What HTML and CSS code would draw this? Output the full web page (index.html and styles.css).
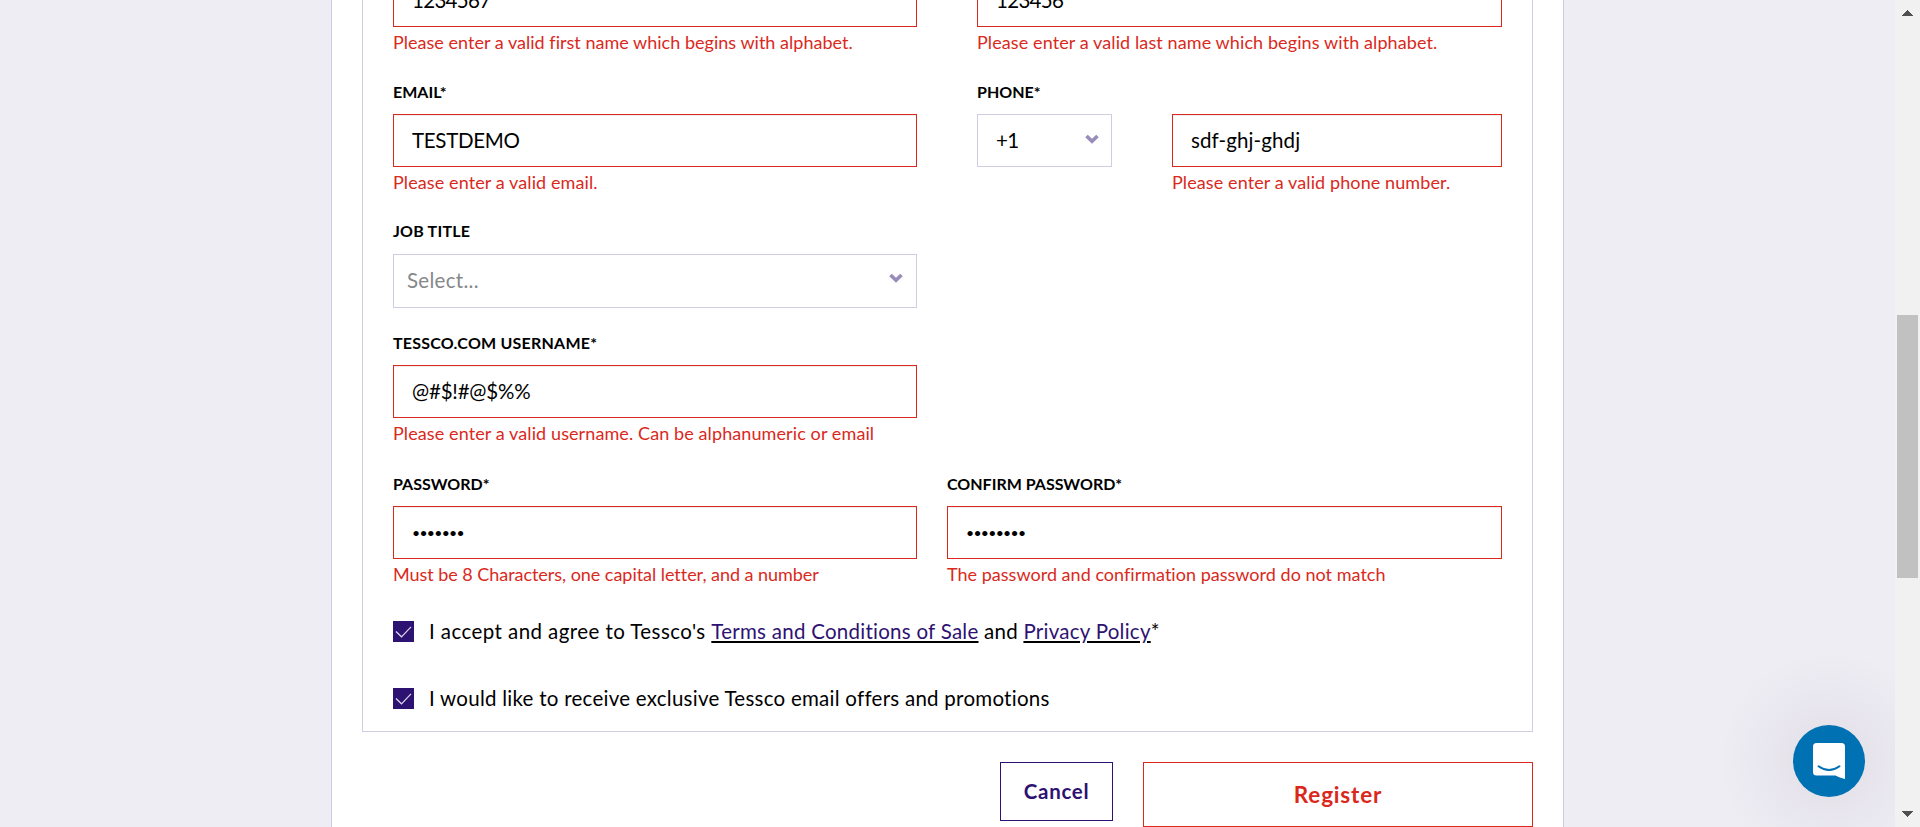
FILE: index.html
```html
<!DOCTYPE html>
<html lang="en">
<head>
<meta charset="utf-8">
<title>Tessco Registration</title>
<link rel="stylesheet" href="styles.css">
</head>
<body>
<main class="page">
  <section class="panel">
    <form class="card">
      <div class="row row-name">
        <div class="field"><div class="input invalid num">1234567</div><p class="error">Please enter a valid first name which begins with alphabet.</p></div>
        <div class="field"><div class="input invalid num">123456</div><p class="error error-wide">Please enter a valid last name which begins with alphabet.</p></div>
      </div>
      <div class="row row-contact">
        <div class="field"><label class="label">EMAIL*</label><div class="input invalid plain">TESTDEMO</div><p class="error error-wide">Please enter a valid email.</p></div>
        <div class="field">
          <label class="label">PHONE*</label>
          <div class="phone">
            <div class="input country num">+1<svg class="chevron" viewBox="0 0 14 10"><path d="M1.500 2l5.500 5.300L12.500 2"/></svg></div>
            <div><div class="input invalid">sdf-ghj-ghdj</div><p class="error error-wide">Please enter a valid phone number.</p></div>
          </div>
        </div>
      </div>
      <div class="row row-job">
        <div class="field"><label class="label label-wide">JOB TITLE</label><div class="input select">Select...<svg class="chevron" viewBox="0 0 14 10"><path d="M1.500 2l5.500 5.300L12.500 2"/></svg></div></div>
      </div>
      <div class="row row-user">
        <div class="field"><label class="label label-wide">TESSCO.COM USERNAME*</label><div class="input invalid symbols">@#$!#@$%%</div><p class="error error-wide">Please enter a valid username. Can be alphanumeric or email</p></div>
      </div>
      <div class="row row-password">
        <div class="field"><label class="label">PASSWORD*</label><div class="input invalid dots">•••••••</div><p class="error error-tight">Must be 8 Characters, one capital letter, and a number</p></div>
        <div class="field"><label class="label">CONFIRM PASSWORD*</label><div class="input invalid dots">••••••••</div><p class="error">The password and confirmation password do not match</p></div>
      </div>
      <div class="check">
        <svg class="box" viewBox="0 0 21 21"><path d="M3 10.5l5.5 5.3L18 5.8"/></svg>
        <span><span class="agree">I accept and agree to Tessco's </span><u><a>Terms and Conditions of Sale</a></u> and <u><a>Privacy Policy</a></u>*</span>
      </div>
      <div class="check">
        <svg class="box" viewBox="0 0 21 21"><path d="M3 10.5l5.5 5.3L18 5.8"/></svg>
        <span>I would like to receive exclusive Tessco email offers and promotions</span>
      </div>
    </form>
    <div class="actions">
      <button class="btn cancel">Cancel</button>
      <button class="btn register">Register</button>
    </div>
  </section>
</main>
<aside class="scrollbar">
  <svg class="arrow" viewBox="0 0 11 6" shape-rendering="crispEdges"><path d="M0 6L5.5 0L11 6z"/></svg>
  <div class="thumb"></div>
  <svg class="arrow down" viewBox="0 0 11 6" shape-rendering="crispEdges"><path d="M0 0h11L5.5 6z"/></svg>
</aside>
<div class="chat">
  <svg viewBox="0 0 72 72"><path fill="#fff" d="M23.5 18h25a3.5 3.5 0 0 1 3.5 3.5V54c-3.500-.7-7-2.300-9.500-3.500h-19A3.500 3.500 0 0 1 20 47V21.500A3.500 3.500 0 0 1 23.500 18z"/><path d="M25.500 41.300q10.500 7.400 21 0" fill="none" stroke="#0071b2" stroke-width="2" stroke-linecap="round"/></svg>
</div>
</body>
</html>
```
FILE: styles.css
```css
* { box-sizing: border-box; }
body {
  margin: 0;
  height: 827px;
  overflow: hidden;
  display: flex;
  background: #eeedf4;
  color: #000;
  font-family: Lato, "Open Sans", sans-serif;
  font-size: 20.5px;
  font-variant-ligatures: none;
}
p { margin: 0; }
.page { flex: 1; display: flex; justify-content: flex-start; padding-left: 331px; }
.panel {
  width: 1233px;
  height: 827px;
  background: #fff;
  border: solid #cfcde1;
  border-width: 0 1px;
  padding: 0 30px;
}
.card {
  display: flow-root;
  height: 732px;
  border: 1px solid #cfcde1;
  border-top: 0;
  padding: 0 30px;
}
.row { display: grid; grid-template-columns: 524px 525px; column-gap: 60px; }
.row-name { margin-top: -26px; height: 108px; }
.row-contact { height: 139px; }
.row-job { height: 112px; }
.row-user { height: 141px; }
.row-password { height: 147px; grid-template-columns: 524px 555px; column-gap: 30px; }
.label {
  display: block;
  height: 20px;
  margin-bottom: 12px;
  font-size: 16px;
  font-weight: 700;
  line-height: 20px;
}
.label-wide { letter-spacing: .22px; }
.input {
  height: 53px;
  border: 1px solid #cfcde1;
  padding: 0 18px 2px;
  display: flex;
  align-items: center;
  letter-spacing: .1px;
}
.invalid { border-color: #da291c; box-shadow: inset 0 1px 1px rgba(0, 0, 0, .075); }
.plain { letter-spacing: -.3px; }
.num { letter-spacing: -.7px; }
.symbols { letter-spacing: -.2px; }
.dots { font-size: 14px; letter-spacing: -.7px; padding-bottom: 0; }
.phone { display: grid; grid-template-columns: 135px 330px; column-gap: 60px; }
.country { padding-right: 12px; }
.select { height: 54px; margin-top: 13px; padding-left: 13px; padding-right: 13px; color: #86888a; letter-spacing: .3px; }
.chevron { width: 14px; height: 10px; margin: -1px 0 0 auto; fill: none; stroke: #988cba; stroke-width: 3.700; }
.select .chevron { margin-top: -5px; }
.error { margin-top: 3px; font-size: 18px; line-height: 24px; color: #da291c; letter-spacing: .02px; white-space: nowrap; }
.error-wide { letter-spacing: .1px; }
.error-tight { letter-spacing: -.04px; }
.check { display: flex; height: 67px; gap: 15px; line-height: 24px; letter-spacing: .26px; white-space: nowrap; }
.check > span { margin-top: -2px; }
.check .agree { letter-spacing: .43px; }
.box { width: 21px; height: 21px; background: #2e1272; fill: none; stroke: #dedaea; stroke-width: 1.200; }
u { text-decoration: underline #000 2px; text-underline-offset: 2px; }
a { color: #2e1272; }
.actions { display: flex; justify-content: flex-end; align-items: flex-start; gap: 30px; margin-top: 30px; }
.btn { font: 700 20.5px Lato, sans-serif; background: #fff; border: 1px solid; padding: 0; }
.cancel { width: 113px; height: 59px; padding-bottom: 2px; color: #2e1272; letter-spacing: .7px; }
.register { width: 390px; height: 65px; padding-bottom: 1px; color: #da291c; font-size: 22.5px; letter-spacing: .8px; }
.scrollbar { width: 25px; background: #f1f1f1; display: flex; flex-direction: column; padding: 10px 2px 10px; }
.arrow { width: 11px; height: 6px; margin-left: 5px; fill: #505050; }
.thumb { width: 21px; height: 263px; margin-top: 299px; background: #c1c1c1; }
.down { margin-top: auto; }
.chat {
  position: absolute;
  left: 1793px;
  top: 725px;
  width: 72px;
  height: 72px;
  border-radius: 50%;
  background: #0071b2;
}
.chat::before {
  content: "";
  position: absolute;
  z-index: -1;
  left: -93px;
  top: -95px;
  width: 195px;
  height: 197px;
  background: radial-gradient(circle at 129px 131px, rgba(95, 60, 90, .07) 20px, rgba(95, 60, 90, 0) 110px);
}
.chat svg { display: block; width: 72px; height: 72px; }
```
